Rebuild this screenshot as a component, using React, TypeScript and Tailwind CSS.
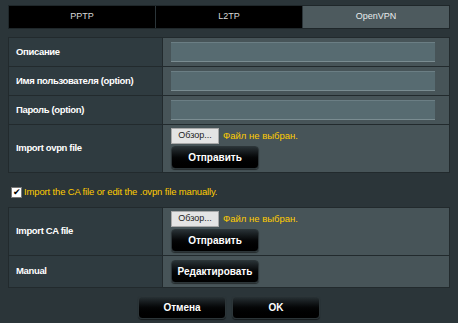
import React from 'react';

const tabs = ['PPTP', 'L2TP', 'OpenVPN'];

const BlackButton = ({ children, className = '' }: { children: React.ReactNode; className?: string }) => (
  <button
    className={`h-[23px] rounded-[4px] border border-[#2c3538] bg-gradient-to-b from-[#283135] via-[#050607] to-[#000] text-[10px] font-bold text-white shadow-[0_1px_1px_rgba(0,0,0,0.5)] ${className}`}
  >
    {children}
  </button>
);

const FilePicker = () => (
  <div className="flex items-center gap-[4px]">
    <button className="h-[16px] w-[48px] border border-[#a9a9a9] bg-[#e4e4e4] text-[9px] text-[#222]">Обзор...</button>
    <span className="text-[9.5px] text-[#fc0]">Файл не выбран.</span>
  </div>
);

const Row = ({ label, children, last = false }: { label: string; children: React.ReactNode; last?: boolean }) => (
  <div className={`flex ${last ? '' : 'border-b border-[#222a2d]'}`}>
    <div className="flex w-[153px] items-center bg-[#2f3b40] pl-[7px] text-[9.5px] font-bold tracking-[-0.35px] text-white">
      {label}
    </div>
    <div className="flex flex-1 flex-col justify-center gap-[2px] border-l border-[#222a2d] bg-[#475458] pl-[8px]">
      {children}
    </div>
  </div>
);

const TextInput = () => (
  <div className="my-[4px] h-[20px] w-[264px] border-y border-t-[#6b7e84] border-b-[#7a8c91] border-x-[#5a6d72] bg-[#576b71]" />
);

export default function App() {
  return (
    <div className="h-[323px] w-[458px] overflow-hidden bg-[#2b3539] pt-[5px] font-['Liberation_Sans',Arial,sans-serif]">
      <div className="mx-[8px] flex h-[24px] border border-[#1f272a]">
        {tabs.map((t, i) => (
          <div
            key={t}
            className={`flex flex-1 items-center justify-center text-[9px] ${
              i === 2 ? 'bg-[#4d5a5e] text-[#e8ecec]' : 'border-r border-[#2b3539] bg-black text-[#d8d8d8]'
            }`}
          >
            {t}
          </div>
        ))}
      </div>

      <div className="mx-[8px] mt-[8px] border border-[#222a2d]">
        <Row label="Описание">
          <TextInput />
        </Row>
        <Row label="Имя пользователя (option)">
          <TextInput />
        </Row>
        <Row label="Пароль (option)">
          <TextInput />
        </Row>
        <Row label="Import ovpn file" last>
          <div className="flex flex-col gap-[2px] py-[3px]">
            <FilePicker />
            <BlackButton className="h-[22px] w-[88px]">Отправить</BlackButton>
          </div>
        </Row>
      </div>

      <label className="mt-[13px] flex h-[13px] items-center gap-[2px] pl-[11px] text-[9.5px] tracking-[-0.15px] text-[#fc0]">
        <span className="flex h-[11px] w-[11px] items-center justify-center border border-[#777] bg-white text-[9px] leading-none text-black">
          ✔
        </span>
        Import the CA file or edit the .ovpn file manually.
      </label>

      <div className="mx-[8px] mt-[8px] border border-[#222a2d]">
        <Row label="Import CA file">
          <div className="flex flex-col gap-[2px] py-[3px]">
            <FilePicker />
            <BlackButton className="h-[22px] w-[88px]">Отправить</BlackButton>
          </div>
        </Row>
        <Row label="Manual" last>
          <BlackButton className="my-[4px] w-[88px]">Редактировать</BlackButton>
        </Row>
      </div>

      <div className="mt-[8px] flex justify-center gap-[6px]">
        <BlackButton className="w-[88px]">Отмена</BlackButton>
        <BlackButton className="w-[88px]">OK</BlackButton>
      </div>
    </div>
  );
}
